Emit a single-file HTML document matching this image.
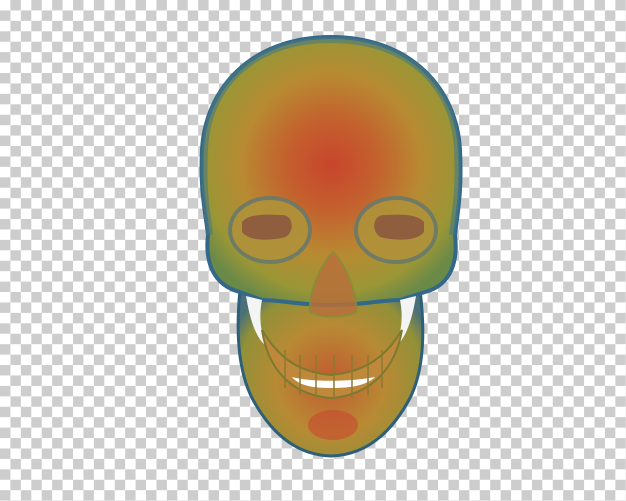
<!DOCTYPE html>
<html><head><style>
html,body{margin:0;padding:0;width:626px;height:501px;overflow:hidden}
body{background-color:#fff;background-image:conic-gradient(#cdcdcd 25%,#fff 0 50%,#cdcdcd 0 75%,#fff 0);background-size:20.86px 20.86px;background-position:0 0}
svg{position:absolute;left:0;top:0}
</style></head><body>
<svg width="626" height="501" viewBox="0 0 626 501">
<defs>
<radialGradient id="g1" cx="331" cy="165" r="150" gradientUnits="userSpaceOnUse">
<stop offset="0" stop-color="#c8452c"/><stop offset="0.3" stop-color="#c4602e"/><stop offset="0.6" stop-color="#b88a32"/><stop offset="0.85" stop-color="#9a9636"/><stop offset="1" stop-color="#6a8a48"/></radialGradient>
<radialGradient id="g2" cx="331" cy="380" r="110" gradientUnits="userSpaceOnUse">
<stop offset="0" stop-color="#c25a30"/><stop offset="0.5" stop-color="#b88a34"/><stop offset="0.85" stop-color="#909038"/><stop offset="1" stop-color="#4a7078"/></radialGradient>
</defs>
<!-- jaw -->
<path d="M240 290 C236 330 238 370 252 398 C268 428 292 455 331 456 C370 455 394 428 410 398 C424 370 425 330 420 290 Z" fill="url(#g2)" stroke="#2d5f7a" stroke-width="3"/>
<!-- cranium -->
<path d="M331 37 C250 37 205 90 202 150 C200 190 205 210 208 235 C205 260 212 285 240 292 L262 300 C280 300 300 305 331 305 C362 305 382 300 400 300 L425 292 C452 285 458 260 455 235 C458 210 462 190 460 150 C457 90 412 37 331 37 Z" fill="url(#g1)" stroke="#33688a" stroke-width="4"/>
<path d="M331 40 C250 40 207 90 205 150 C203 190 207 210 210 235" fill="none" stroke="#4a7a80" stroke-width="6" opacity="0.6"/>
<path d="M331 40 C412 40 455 90 457 150 C459 190 455 210 452 235" fill="none" stroke="#4a7a80" stroke-width="6" opacity="0.6"/>
<!-- gaps between cheek and jaw -->
<path d="M246 296 L262 300 C258 320 262 335 266 346 C256 338 250 320 246 296 Z" fill="#f4f4f4"/>
<path d="M416 296 L400 300 C404 320 400 335 396 346 C406 338 412 320 416 296 Z" fill="#f4f4f4"/>
<!-- eyes -->
<ellipse cx="270" cy="230" rx="40" ry="32" fill="#b0923a" stroke="#6a7a6a" stroke-width="4" opacity="0.9"/>
<ellipse cx="396" cy="230" rx="40" ry="32" fill="#b0923a" stroke="#6a7a6a" stroke-width="4" opacity="0.9"/>
<path d="M242 222 C250 212 275 215 282 215 C295 215 295 236 282 238 C270 240 250 242 242 232 Z" fill="#8e5e3e"/>
<path d="M424 222 C416 212 391 215 384 215 C371 215 371 236 384 238 C396 240 416 242 424 232 Z" fill="#8e5e3e"/>
<!-- nose -->
<path d="M333 252 C320 265 308 295 310 312 C320 318 346 318 356 312 C358 295 346 265 333 252 Z" fill="#b8703a" stroke="#8a8a3a" stroke-width="2" opacity="0.85"/>
<!-- teeth -->
<path d="M262 330 C280 360 300 372 331 375 C362 372 384 360 402 330 C395 370 370 395 331 398 C292 395 268 370 262 330 Z" fill="#c0883a" stroke="#7a7a30" stroke-width="2"/>
<path d="M292 377 C310 382 350 382 375 377 C365 387 345 388 331 388 C318 388 300 387 292 377 Z" fill="#fff"/>
<g stroke="#8a7a30" stroke-width="1.5" fill="none">
<path d="M300 355 V395 M316 355 V398 M334 355 V400 M352 355 V398 M368 355 V395 M285 350 V388 M382 350 V388"/>
</g>
<ellipse cx="333" cy="425" rx="25" ry="15" fill="#c84a30" opacity="0.6"/>
</svg>
</body></html>
